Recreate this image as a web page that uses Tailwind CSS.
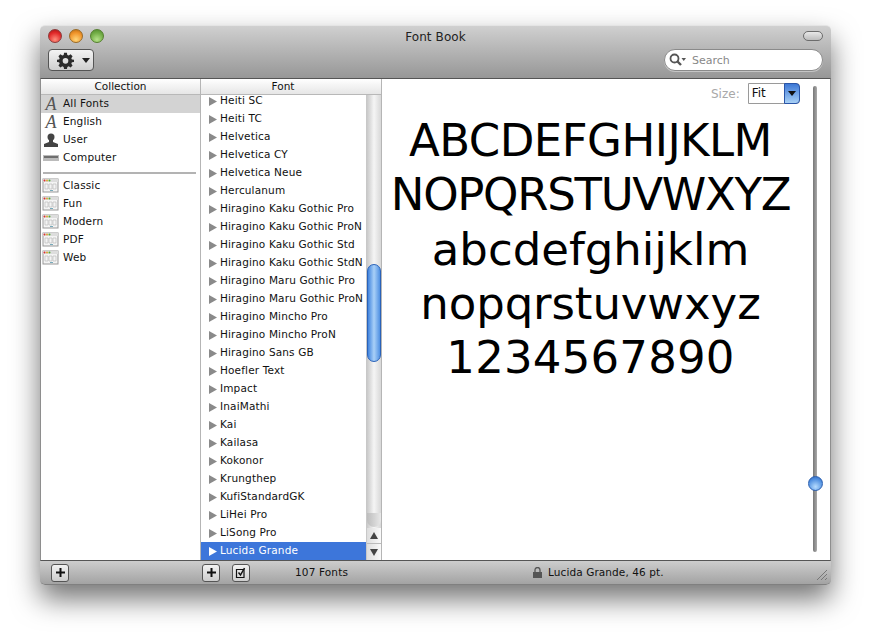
<!DOCTYPE html>
<html lang="en">

<head>
    <meta charset="UTF-8">
    <title>Font Book</title>
    <script src="https://cdn.jsdelivr.net/npm/@tailwindcss/browser@4"></script>
</head>

<body class="bg-white w-[871px] h-[640px] overflow-hidden pl-[40px] pt-[25px] font-['DejaVu_Sans',sans-serif] text-[10.5px] text-[#111]">
    <div class="w-[791px] h-[560px] flex flex-col rounded-[5px] shadow-[0_14px_28px_rgba(0,0,0,0.55)]">
        <!-- Title bar -->
        <div class="h-[53px] shrink-0 relative rounded-t-[5px] border-t border-[#e4e4e4] bg-gradient-to-b from-[#d0d0d0] to-[#979797]">
            <div class="flex gap-[7px] pl-[8px] pt-[3px]">
                <span class="w-[14px] h-[14px] rounded-full border border-[#8c3a3a] bg-[radial-gradient(circle_at_50%_80%,#ff8f7d,#e22a2a_60%,#a51414)]"></span>
                <span class="w-[14px] h-[14px] rounded-full border border-[#9a6a25] bg-[radial-gradient(circle_at_50%_80%,#ffd67a,#f0942a_60%,#b86a12)]"></span>
                <span class="w-[14px] h-[14px] rounded-full border border-[#55802f] bg-[radial-gradient(circle_at_50%_80%,#b6e28a,#72ad46_60%,#4f8a2b)]"></span>
            </div>
            <div class="absolute left-0 right-0 top-[3px] text-center text-[12px] tracking-[0.1px] leading-[17px] text-[#222]">Font Book</div>
            <div class="absolute right-[8px] top-[5px] w-[20px] h-[10px] rounded-full border border-[#6c6c6c] bg-gradient-to-b from-[#e8e8e8] to-[#bdbdbd]"></div>
            <div class="flex justify-between pl-[8px] pr-[8px] mt-[6px]">
                <!-- gear button -->
                <div class="w-[46px] h-[22px] rounded-[4px] border border-[#555] bg-gradient-to-b from-[#f4f4f4] to-[#cfcfcf] flex items-center pl-[8px] gap-[8px]">
                    <svg width="17" height="17" viewBox="0 0 24 24" fill="#2b2b2b">
                        <path fill-rule="evenodd" d="M10 1h4l.6 3.200 1.900.8L19.200 3.200 22 6l-1.800 2.700.8 1.900L24 11v3l-3 .6-.8 1.900L22 19.200 19.200 22l-2.700-1.800-1.900.8L14 24h-4l-.6-3-1.900-.8L4.800 22 2 19.200l1.800-2.700-.8-1.900L0 14v-3l3-.4.8-1.900L2 6l2.800-2.800L7.500 5l1.900-.8zM12 8.500a4 4 0 1 0 0 8 4 4 0 0 0 0-8z"/>
                    </svg>
                    <svg width="8" height="5" viewBox="0 0 8 5" fill="#222"><path d="M0 0h8L4 5z"/></svg>
                </div>
                <!-- search -->
                <div class="w-[159px] h-[22px] rounded-full border border-[#8a8a8a] bg-white flex items-center pl-[4px] gap-[6px] shadow-[0_1px_0_rgba(255,255,255,0.4)]">
                    <svg width="17" height="14" viewBox="0 0 17 14" fill="none" stroke="#555">
                        <circle cx="5.500" cy="5.500" r="4" stroke-width="1.800"/>
                        <path d="M8.500 8.500l3.500 3.500" stroke-width="2.400"/>
                        <path d="M12.500 5h4.500l-2.250 3z" fill="#555" stroke="none"/>
                    </svg>
                    <span class="text-[11px] leading-[16px] pt-px text-[#888]">Search</span>
                </div>
            </div>
        </div>

        <!-- Main -->
        <div class="h-[483px] shrink-0 flex bg-white border border-x-[#8e8e8e] border-t-[#555] border-b-[#555]">
            <!-- Collection -->
            <div class="w-[160px] shrink-0 flex flex-col border-r border-[#b5b5b5]">
                <div class="h-[16px] shrink-0 text-center leading-[15px] border-b border-[#b8b8b8] bg-gradient-to-b from-white to-[#e6e6e6]">Collection</div>
                <div id="collections"></div>
            </div>
            <!-- Font list -->
            <div class="w-[181px] shrink-0 flex flex-col border-r border-[#b5b5b5]">
                <div class="h-[16px] shrink-0 text-center leading-[15px] pr-[16px] border-b border-[#b8b8b8] bg-gradient-to-b from-white to-[#e6e6e6]">Font</div>
                <div class="flex-1 flex min-h-0">
                    <div id="fonts" class="w-[165px] shrink-0 flex flex-col justify-end overflow-hidden"></div>
                    <!-- scrollbar -->
                    <div class="w-[15px] shrink-0 relative flex flex-col justify-end border-l border-[#c8c8c8] bg-gradient-to-r from-[#c9c9c9] via-[#f5f5f5] to-[#d8d8d8]">
                        <div class="absolute left-0 right-0 top-[169px] h-[98px] rounded-full border border-[#2a62b8] bg-gradient-to-r from-[#3f83dd] via-[#a9d0f7] to-[#4f90e2]"></div>
                        <div class="absolute left-0 right-0 bottom-[33px] h-[14px] rounded-b-full bg-gradient-to-r from-[#bdbdbd] to-[#e8e8e8]"></div>
                        <div class="h-[16px] flex items-center justify-center border-b border-[#bbb] bg-gradient-to-r from-[#ddd] to-[#fafafa]">
                            <svg width="8" height="7" viewBox="0 0 8 7" fill="#444"><path d="M4 0l4 7H0z"/></svg>
                        </div>
                        <div class="h-[16px] flex items-center justify-center bg-gradient-to-r from-[#ddd] to-[#fafafa]">
                            <svg width="8" height="7" viewBox="0 0 8 7" fill="#444"><path d="M0 0h8L4 7z"/></svg>
                        </div>
                    </div>
                </div>
            </div>
            <!-- Preview -->
            <div class="flex-1 flex flex-col relative min-w-0">
                <div class="flex items-center h-[21px] mt-[4px] pl-[329px] gap-[8px]">
                    <span class="text-[12px] text-[#a8a8a8]">Size:</span>
                    <div class="w-[52px] h-[21px] flex border border-[#9a9a9a] rounded-r-[4px]">
                        <span class="flex-1 pl-[3px] text-[12px] leading-[19px]">Fit</span>
                        <span class="w-[16px] -my-px -mr-px rounded-r-[4px] border border-[#2a55a8] bg-gradient-to-b from-[#3d78d6] to-[#a8d0f5] flex items-center justify-center">
                            <svg width="8" height="5" viewBox="0 0 8 5" fill="#111"><path d="M0 0h8L4 5z"/></svg>
                        </span>
                    </div>
                </div>
                <div class="w-[417px] mt-[10px] text-center text-[45px] leading-[54.25px] text-black whitespace-nowrap">
                    <div class="tracking-[-0.55px]">ABCDEFGHIJKLM</div>
                    <div class="tracking-[-1.300px]">NOPQRSTUVWXYZ</div>
                    <div>abcdefghijklm</div>
                    <div class="tracking-[-0.1px]">nopqrstuvwxyz</div>
                    <div class="tracking-[0.2px]">1234567890</div>
                </div>
                <!-- zoom slider -->
                <div class="absolute left-[431px] top-[7px] w-[4px] h-[466px] rounded-full bg-gradient-to-r from-[#777] to-[#aaa]"></div>
                <div class="absolute left-[426px] top-[397px] w-[15px] h-[15px] rounded-full border border-[#2a5fb0] bg-[radial-gradient(circle_at_50%_75%,#b6dcff,#4f8fe0_65%,#2a62b8)]"></div>
            </div>
        </div>

        <!-- Status bar -->
        <div class="h-[24px] shrink-0 relative flex items-center rounded-b-[5px] border-b border-[#808080] bg-gradient-to-b from-[#cdcdcd] to-[#a3a3a3]">
            <div class="ml-[11px] w-[18px] h-[18px] rounded-[3px] border border-[#555] bg-gradient-to-b from-[#f2f2f2] to-[#cdcdcd] flex items-center justify-center">
                <svg width="9" height="9" viewBox="0 0 9 9" fill="#111"><path d="M3.500 0h2v3.500H9v2H5.500V9h-2V5.500H0v-2h3.500z"/></svg>
            </div>
            <div class="ml-[133px] w-[18px] h-[18px] rounded-[3px] border border-[#555] bg-gradient-to-b from-[#f2f2f2] to-[#cdcdcd] flex items-center justify-center">
                <svg width="9" height="9" viewBox="0 0 9 9" fill="#111"><path d="M3.500 0h2v3.500H9v2H5.500V9h-2V5.500H0v-2h3.500z"/></svg>
            </div>
            <div class="ml-[12px] w-[18px] h-[18px] rounded-[3px] border border-[#555] bg-gradient-to-b from-[#f2f2f2] to-[#cdcdcd] flex items-center justify-center">
                <svg width="12" height="12" viewBox="0 0 12 12" fill="none" stroke="#111"><path d="M1.500 2.500h7.500v8H1.500z" stroke-width="1.200"/><path d="M3.500 5.500l2 2.500 4-7" stroke-width="1.500"/></svg>
            </div>
            <span class="ml-[45px] w-[52px] whitespace-nowrap tracking-[0.15px]">107 Fonts</span>
            <svg class="ml-[186px]" width="9" height="11" viewBox="0 0 9 11" fill="#555"><path d="M0 5h9v6H0z"/><path d="M2 5V3a2.500 2.500 0 0 1 5 0v2" fill="none" stroke="#555" stroke-width="1.300"/></svg>
            <span class="ml-[6px] whitespace-nowrap tracking-[0.1px]">Lucida Grande, 46 pt.</span>
            <svg class="absolute right-[3px] bottom-[3px]" width="12" height="12" viewBox="0 0 12 12" stroke="#777" fill="none"><path d="M1 11L11 1M5 11l6-6M9 11l2-2"/></svg>
        </div>
    </div>

    <script>
        const FONTS = ["Heiti SC", "Heiti TC", "Helvetica", "Helvetica CY", "Helvetica Neue", "Herculanum",
            "Hiragino Kaku Gothic Pro", "Hiragino Kaku Gothic ProN", "Hiragino Kaku Gothic Std", "Hiragino Kaku Gothic StdN",
            "Hiragino Maru Gothic Pro", "Hiragino Maru Gothic ProN", "Hiragino Mincho Pro", "Hiragino Mincho ProN",
            "Hiragino Sans GB", "Hoefler Text", "Impact", "InaiMathi", "Kai", "Kailasa", "Kokonor", "Krungthep",
            "KufiStandardGK", "LiHei Pro", "LiSong Pro", "Lucida Grande"];

        function fontRow(name, selected) {
            const row = selected ? "bg-[#3d76da] text-white" : "";
            const arrow = selected ? "#fff" : "#8a8a8a";
            return `<div class="h-[18px] shrink-0 flex items-center pl-[8px] gap-[3px] whitespace-nowrap ${row}">
                <svg class="shrink-0" width="8" height="9" viewBox="0 0 8 9" fill="${arrow}"><path d="M0 0l8 4.500L0 9z"/></svg>
                <span class="tracking-[0.15px]">${name}</span></div>`;
        }

        function bookIcon() {
            return `<svg width="18" height="16" viewBox="0 0 18 16">
                <rect x="1" y="1" width="15" height="13" fill="#f4f4f4" stroke="#999"/>
                <rect x="1" y="1" width="15" height="3" fill="#ddd"/>
                <circle cx="2.500" cy="2.500" r="1" fill="#d33"/><circle cx="5" cy="2.500" r="1" fill="#da3"/><circle cx="7.500" cy="2.500" r="1" fill="#5a3"/>
                <path d="M3 6h3v5H3zM7 6h3v5H7zM11 6h3v5h-3z" fill="none" stroke="#bbb" stroke-width="0.700"/>
                <path d="M8 12.500h3" stroke="#7ab" />
            </svg>`;
        }

        function collectionRow(label, icon, selected) {
            const row = selected ? "bg-[#d3d3d3]" : "";
            return `<div class="h-[18px] flex items-center pl-px gap-[3px] ${row}">
                <span class="w-[18px] h-[18px] shrink-0 flex items-center justify-center overflow-hidden">${icon}</span>
                <span class="tracking-[0.15px]">${label}</span></div>`;
        }

        const fancyA = `<span class="font-['Liberation_Serif',serif] italic text-[18px] leading-[18px] text-[#555]">A</span>`;
        const userIcon = `<svg width="14" height="14" viewBox="0 0 14 14" fill="#444"><circle cx="7" cy="4" r="3.500"/><path d="M5 7h4v2l5 2v3H0v-3l5-2z"/></svg>`;
        const diskIcon = `<svg width="16" height="6" viewBox="0 0 16 6"><rect width="16" height="6" fill="#bbb"/><path d="M1 2h14" stroke="#222"/></svg>`;

        document.querySelector("#fonts").innerHTML = FONTS.map((f, i) => fontRow(f, i === FONTS.length - 1)).join("");
        document.querySelector("#collections").innerHTML =
            collectionRow("All Fonts", fancyA, true) +
            collectionRow("English", fancyA) +
            collectionRow("User", userIcon) +
            collectionRow("Computer", diskIcon) +
            `<div class="h-[2px] mt-[5px] mb-[3px] ml-[2px] mr-[4px] bg-[#b3b3b3]"></div>` +
            ["Classic", "Fun", "Modern", "PDF", "Web"].map(c => collectionRow(c, bookIcon())).join("");
    </script>
</body>

</html>
